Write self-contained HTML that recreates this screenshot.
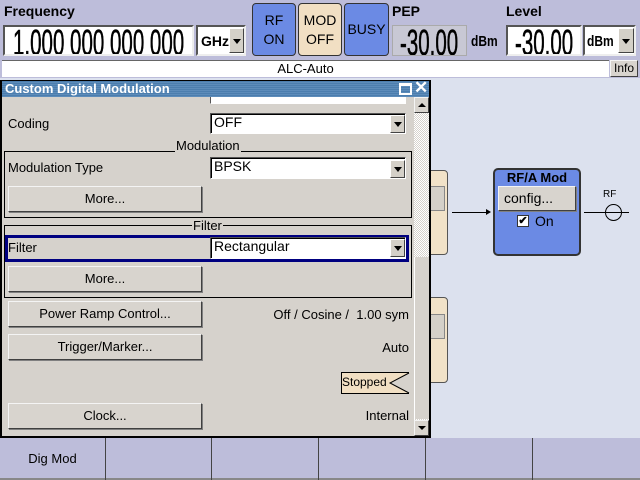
<!DOCTYPE html><html><head><style>
*{margin:0;padding:0;box-sizing:border-box}
body{width:640px;height:480px;overflow:hidden;background:#dce1ee;font-family:"Liberation Sans",sans-serif;position:relative;font-size:13px;color:#000}
.a{position:absolute}
.top{left:0;top:0;width:640px;height:78px;background:#bdbdda}
.lbl{font-weight:bold;font-size:14px}
.fld{background:#fff;border:2px solid;border-color:#555 #eee #eee #555;overflow:hidden}
.big{font-size:36px;line-height:36px;transform:scaleX(.57);transform-origin:left top;white-space:nowrap;-webkit-text-stroke:0.6px #000}
.dd{background:#d4d0c8;border:1px solid;border-color:#fff #444 #444 #fff}
.dd:after{content:"";position:absolute;left:50%;top:50%;margin:-2px 0 0 -4px;border:4px solid transparent;border-top:5px solid #000;border-bottom:0}
.kb{border:1px solid #333;border-radius:4px;font-size:14px;text-align:center;line-height:19px;padding-top:7px}
.btn{background:#d8d4ce;border:1px solid;border-color:#f4f4f4 #404040 #404040 #f4f4f4;box-shadow:1px 1px 0 #808080;text-align:center;font-size:13px}
.sel{background:#fff;border:1px solid;border-color:#555 #fff #fff #555;box-shadow:inset 1px 1px 0 #000;font-size:14px;padding-left:3px}
.grp{border:1px solid #000}
.leg{background:#d6d2cc;font-size:13px;padding:0 1px}
</style></head><body>
<div class="a top"></div>
<div class="a lbl" style="left:4px;top:3px">Frequency</div>
<div class="a fld" style="left:3px;top:25px;width:191px;height:31px"><div class="big" style="margin:-2px 0 0 8px">1.000 000 000 000</div></div>
<div class="a fld" style="left:196px;top:25px;width:50px;height:31px;font-weight:bold;font-size:14px;padding:6px 0 0 3px">GHz</div>
<div class="a dd" style="left:229px;top:28px;width:15px;height:25px"></div>
<div class="a kb" style="left:252px;top:3px;width:44px;height:53px;background:#6b8ae4">RF<br>ON</div>
<div class="a kb" style="left:298px;top:3px;width:44px;height:53px;background:#f1dfc3">MOD<br>OFF</div>
<div class="a kb" style="left:344px;top:3px;width:45px;height:53px;background:#6b8ae4;padding-top:16px">BUSY</div>
<div class="a lbl" style="left:392px;top:3px">PEP</div>
<div class="a" style="left:392px;top:25px;width:75px;height:31px;background:#c8c8d4;border:1px solid #aaa;overflow:hidden"><div class="big" style="margin:-1px 0 0 7px">-30.00</div></div>
<div class="a" style="left:471px;top:33px;font-weight:bold;font-size:15px;transform:scaleX(.8);transform-origin:left">dBm</div>
<div class="a lbl" style="left:506px;top:3px">Level</div>
<div class="a fld" style="left:506px;top:25px;width:76px;height:31px"><div class="big" style="margin:-2px 0 0 7px">-30.00</div></div>
<div class="a fld" style="left:583px;top:25px;width:53px;height:31px;font-weight:bold;font-size:15px;padding:6px 0 0 2px"><span style="display:inline-block;transform:scaleX(.8);transform-origin:left">dBm</span></div>
<div class="a dd" style="left:618px;top:28px;width:16px;height:25px"></div>
<div class="a" style="left:2px;top:60px;width:607px;height:17px;background:#fff;border-top:1px solid #666;text-align:center;font-size:13px;line-height:15px">ALC-Auto</div>
<div class="a btn" style="left:610px;top:60px;width:28px;height:17px;line-height:15px;font-size:12px;box-shadow:none">Info</div>

<div class="a" style="left:420px;top:170px;width:28px;height:85px;background:#f1e2c8;border:1px solid #555;border-radius:4px"></div>
<div class="a" style="left:420px;top:186px;width:25px;height:25px;background:#d4d0c8;border:1px solid #888"></div>
<div class="a" style="left:420px;top:297px;width:28px;height:86px;background:#f1e2c8;border:1px solid #555;border-radius:4px"></div>
<div class="a" style="left:420px;top:314px;width:25px;height:25px;background:#d4d0c8;border:1px solid #888"></div>
<div class="a" style="left:452px;top:212px;width:36px;height:1px;background:#000"></div>
<div class="a" style="left:486px;top:209px;border:3px solid transparent;border-left:5px solid #000"></div>
<div class="a" style="left:493px;top:168px;width:88px;height:88px;background:#6b8ae4;border:2px solid #333;border-radius:5px"></div>
<div class="a" style="left:493px;top:170px;width:88px;text-align:center;font-weight:bold;font-size:13px">RF/A Mod</div>
<div class="a btn" style="left:498px;top:186px;width:78px;height:25px;text-align:left;padding:3px 0 0 5px;font-size:14px">config...</div>
<div class="a" style="left:517px;top:215px;width:12px;height:12px;background:#fff;border:1px solid #333;font-size:11px;line-height:10px;text-align:center;font-weight:bold">✔</div>
<div class="a" style="left:535px;top:213px;font-size:14px">On</div>
<div class="a" style="left:584px;top:212px;width:44px;height:1px;background:#000"></div>
<div class="a" style="left:605px;top:204px;width:17px;height:17px;border:1px solid #000;border-radius:50%;background:#dce1ee"></div>
<div class="a" style="left:605px;top:212px;width:24px;height:1px;background:#000"></div>
<div class="a" style="left:603px;top:189px;font-size:10px">RF</div>

<div class="a" style="left:0;top:80px;width:431px;height:358px;background:#d6d2cc;border:2px solid #000;border-top:1px solid #000"></div>
<div class="a" style="left:2px;top:81px;width:427px;height:16px;background:repeating-linear-gradient(#4c7eae 0 1px,#5d8cba 1px 2px);color:#fff;font-weight:bold;font-size:13px;padding-left:3px;line-height:16px">Custom Digital Modulation</div>
<div class="a" style="left:399px;top:83px;width:13px;height:12px;border:2px solid #fff;border-top-width:3px"></div>
<div class="a" style="left:414px;top:81px;width:14px;height:14px;color:#fff;font-size:17px;line-height:13px;font-weight:bold">✕</div>
<div class="a" style="left:414px;top:97px;width:15px;height:339px;background:repeating-conic-gradient(#d6d2cc 0 25%,#fff 0 50%) 0 0/2px 2px"></div>
<div class="a btn" style="left:414px;top:97px;width:15px;height:16px;box-shadow:none"></div>
<div class="a" style="left:418px;top:103px;border:4px solid transparent;border-bottom:4px solid #000;border-top:0"></div>
<div class="a" style="left:414px;top:257px;width:15px;height:162px;background:#d6d2cc;border-left:1px solid #fff"></div>
<div class="a btn" style="left:414px;top:420px;width:15px;height:16px;box-shadow:none"></div>
<div class="a" style="left:418px;top:426px;border:4px solid transparent;border-top:4px solid #000;border-bottom:0"></div>

<div class="a sel" style="left:210px;top:97px;width:196px;height:7px;border-top:0;box-shadow:none"></div>
<div class="a" style="left:8px;top:116px;font-size:13px">Coding</div>
<div class="a sel" style="left:210px;top:113px;width:196px;height:21px">OFF</div>
<div class="a dd" style="left:390px;top:115px;width:15px;height:18px"></div>

<div class="a grp" style="left:4px;top:151px;width:408px;height:67px"></div>
<div class="a leg" style="left:175px;top:138px">Modulation</div>
<div class="a" style="left:8px;top:160px">Modulation Type</div>
<div class="a sel" style="left:210px;top:157px;width:196px;height:22px">BPSK</div>
<div class="a dd" style="left:390px;top:160px;width:15px;height:18px"></div>
<div class="a btn" style="left:8px;top:186px;width:194px;height:26px;line-height:24px">More...</div>

<div class="a grp" style="left:4px;top:225px;width:408px;height:73px"></div>
<div class="a leg" style="left:192px;top:218px">Filter</div>
<div class="a" style="left:5px;top:235px;width:404px;height:27px;border:3px solid #000080"></div>
<div class="a" style="left:8px;top:240px">Filter</div>
<div class="a sel" style="left:210px;top:237px;width:196px;height:22px">Rectangular</div>
<div class="a dd" style="left:390px;top:239px;width:15px;height:18px"></div>
<div class="a btn" style="left:8px;top:266px;width:194px;height:26px;line-height:24px">More...</div>

<div class="a btn" style="left:8px;top:301px;width:194px;height:26px;line-height:24px">Power Ramp Control...</div>
<div class="a" style="left:210px;top:307px;width:199px;text-align:right">Off / Cosine / &nbsp;1.00 sym</div>
<div class="a btn" style="left:8px;top:334px;width:194px;height:26px;line-height:24px">Trigger/Marker...</div>
<div class="a" style="left:210px;top:340px;width:199px;text-align:right">Auto</div>
<div class="a" style="left:341px;top:372px;width:68px;height:22px;background:#f1dfc3;border:1px solid #000;font-size:12px;line-height:19px">Stopped</div>
<svg class="a" style="left:388px;top:372px" width="22" height="22"><path d="M21 1 L2 11 L21 21" stroke="#000" fill="#d6d2cc"/></svg>
<div class="a btn" style="left:8px;top:403px;width:194px;height:26px;line-height:24px">Clock...</div>
<div class="a" style="left:210px;top:408px;width:199px;text-align:right">Internal</div>

<div class="a" style="left:0;top:438px;width:640px;height:42px;background:#bdbdda;border-bottom:2px solid #888"></div>
<div class="a" style="left:0;top:451px;width:105px;text-align:center;font-size:13px">Dig Mod</div>
<div class="a" style="left:105px;top:438px;width:1px;height:42px;background:#444"></div>
<div class="a" style="left:211px;top:438px;width:1px;height:42px;background:#444"></div>
<div class="a" style="left:318px;top:438px;width:1px;height:42px;background:#444"></div>
<div class="a" style="left:425px;top:438px;width:1px;height:42px;background:#444"></div>
<div class="a" style="left:532px;top:438px;width:1px;height:42px;background:#444"></div>
</body></html>
